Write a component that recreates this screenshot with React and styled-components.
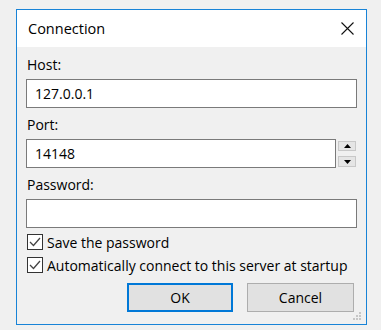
import React, { useState } from 'react';
import styled, { createGlobalStyle } from 'styled-components';

const GlobalStyle = createGlobalStyle`
  html, body {
    margin: 0;
    padding: 0;
    background: #f0f0f0;
  }
  body {
    font-family: "Open Sans", "Noto Sans", "Liberation Sans", sans-serif;
    color: #000;
  }
`;

const Page = styled.div`
  padding: 9px 0 0 16px;
`;

const Window = styled.div`
  position: relative;
  width: 349px;
  height: 314px;
  border: 1px solid #1883d7;
  background: #f0f0f0;
  display: flex;
  flex-direction: column;
`;

const TitleBar = styled.div`
  height: 37px;
  background: #fff;
  display: flex;
  align-items: center;
  justify-content: space-between;
  padding: 0 12px 0 11px;
`;

const Title = styled.span`
  font-size: 14.5px;
  color: #000;
`;

const CloseIcon = styled.svg`
  width: 13px;
  height: 13px;
  display: block;
`;

const Body = styled.div`
  flex: 1;
  display: flex;
  flex-direction: column;
  padding: 8px 9px 0 9px;
`;

const Label = styled.label`
  font-size: 14px;
  line-height: 20px;
  height: 20px;
  margin-left: 1px;
  margin-bottom: 4px;
`;

const Field = styled.div`
  display: flex;
  gap: 2px;
  margin-bottom: ${p => p.$gap || 7}px;
`;

const TextBox = styled.input`
  box-sizing: border-box;
  width: ${p => p.$width || 332}px;
  height: 29px;
  border: 1px solid #7a7a7a;
  background: #fff;
  padding: 0 8px;
  font: inherit;
  font-size: 14px;
  color: #000;
  outline: none;
`;

const Spinner = styled.div`
  display: flex;
  flex-direction: column;
  justify-content: space-between;
  padding: 2px 0 1px 0;
`;

const SpinButton = styled.button`
  box-sizing: border-box;
  width: 18px;
  height: ${p => p.$h}px;
  border: 1px solid #c8c8c8;
  background: #e5e5e5;
  padding: 0;
  display: flex;
  align-items: center;
  justify-content: center;
`;

const Check = styled.label`
  display: flex;
  align-items: center;
  gap: 4px;
  font-size: 14px;
  height: 16px;
  margin-left: 1px;
  margin-bottom: ${p => p.$gap || 7}px;
`;

const Box = styled.span`
  box-sizing: border-box;
  width: 16px;
  height: 16px;
  border: 1px solid #333;
  background: #fff;
  display: flex;
  align-items: center;
  justify-content: center;
`;

const Buttons = styled.div`
  display: flex;
  justify-content: flex-end;
  gap: 14px;
  padding-right: 3px;
  margin-top: 5px;
`;

const Button = styled.button`
  box-sizing: border-box;
  width: ${p => (p.$primary ? 106 : 107)}px;
  height: 29px;
  background: #e1e1e1;
  border: ${p => (p.$primary ? '2px solid #0078d7' : '1px solid #adadad')};
  font: inherit;
  font-size: 14px;
  color: #000;
  padding: 0;
`;

const Grip = styled.svg`
  position: absolute;
  right: 4px;
  bottom: 3px;
  width: 9px;
  height: 9px;
`;

const Arrow = ({ down }) => (
  <svg width="7" height="4" viewBox="0 0 7 4">
    <path d={down ? 'M0 0h7L3.5 4z' : 'M0 4h7L3.5 0z'} fill="#000" />
  </svg>
);

const Checkbox = ({ checked, children, gap }) => (
  <Check $gap={gap}>
    <Box>
      {checked && (
        <svg width="12" height="10" viewBox="0 0 12 10">
          <path d="M1 5l3.5 3.5L11 1" fill="none" stroke="#444" strokeWidth="1.3" />
        </svg>
      )}
    </Box>
    {children}
  </Check>
);

const App = () => {
  const [host, setHost] = useState('127.0.0.1');
  const [port, setPort] = useState('14148');
  const [password, setPassword] = useState('');

  return (
    <Page>
      <GlobalStyle />
      <Window>
        <TitleBar>
          <Title>Connection</Title>
          <CloseIcon viewBox="0 0 13 13">
            <path d="M0.5 0.5l12 12M12.5 0.5l-12 12" stroke="#111" strokeWidth="1.1" />
          </CloseIcon>
        </TitleBar>
        <Body>
          <Label>Host:</Label>
          <Field>
            <TextBox value={host} onChange={e => setHost(e.target.value)} />
          </Field>
          <Label>Port:</Label>
          <Field>
            <TextBox $width={310} value={port} onChange={e => setPort(e.target.value)} />
            <Spinner>
              <SpinButton $h={10}><Arrow /></SpinButton>
              <SpinButton $h={11}><Arrow down /></SpinButton>
            </Spinner>
          </Field>
          <Label>Password:</Label>
          <Field $gap={6}>
            <TextBox type="password" value={password} onChange={e => setPassword(e.target.value)} />
          </Field>
          <Checkbox checked>Save the password</Checkbox>
          <Checkbox checked gap={5}>Automatically connect to this server at startup</Checkbox>
          <Buttons>
            <Button $primary>OK</Button>
            <Button>Cancel</Button>
          </Buttons>
        </Body>
        <Grip viewBox="0 0 9 9">
          <rect x="6" y="0" width="2" height="2" fill="#c6c6c6" />
          <rect x="3" y="3" width="2" height="2" fill="#c6c6c6" />
          <rect x="6" y="3" width="2" height="2" fill="#c6c6c6" />
          <rect x="0" y="6" width="2" height="2" fill="#c6c6c6" />
          <rect x="3" y="6" width="2" height="2" fill="#c6c6c6" />
          <rect x="6" y="6" width="2" height="2" fill="#c6c6c6" />
        </Grip>
      </Window>
    </Page>
  );
};

export default App;
